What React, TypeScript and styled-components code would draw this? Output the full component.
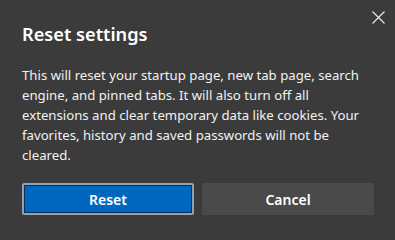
import styled, { createGlobalStyle } from "styled-components";

const GlobalStyle = createGlobalStyle`
  html, body {
    margin: 0;
    padding: 0;
    background: #3b3b3b;
  }
`;

const Dialog = styled.div`
  position: relative;
  box-sizing: border-box;
  width: 395px;
  height: 235px;
  padding: 20px 21px 0 22px;
  background: #3b3b3b;
  color: #ffffff;
  font-family: "Noto Sans", "Open Sans", Arial, sans-serif;
  overflow: hidden;
`;

const CloseButton = styled.button`
  position: absolute;
  top: 6px;
  right: 6px;
  width: 22px;
  height: 22px;
  padding: 0;
  border: none;
  background: transparent;
  display: flex;
  align-items: center;
  justify-content: center;
  cursor: pointer;
`;

const Title = styled.h2`
  margin: 0;
  font-size: 18.2px;
  line-height: 28px;
  font-weight: 600;
  color: #ffffff;
`;

const Body = styled.p`
  margin: 17px 0 0;
  font-size: 13.2px;
  line-height: 20px;
  color: #f2f2f2;
  white-space: nowrap;
`;

const Actions = styled.div`
  display: grid;
  grid-template-columns: 172px 172px;
  gap: 8px;
  margin-top: 18px;
`;

const Button = styled.button<{ $primary?: boolean }>`
  box-sizing: border-box;
  height: 32px;
  border-radius: 2px;
  font-family: inherit;
  font-size: 14px;
  font-weight: 600;
  color: #ffffff;
  cursor: pointer;
  border: ${(p) => (p.$primary ? "2px solid #8fa3b3" : "none")};
  background: ${(p) => (p.$primary ? "#0067c0" : "#4a4a4a")};
  box-shadow: ${(p) => (p.$primary ? "inset 0 0 0 1px #0b2f52" : "none")};
`;

function CloseIcon() {
  return (
    <svg width="13" height="13" viewBox="0 0 13 13">
      <path d="M0.5 0.5 L12.5 12.5 M12.5 0.5 L0.5 12.5" stroke="#e8e8e8" strokeWidth="1.2" />
    </svg>
  );
}

function App() {
  return (
    <>
      <GlobalStyle />
      <Dialog>
        <CloseButton aria-label="Close">
          <CloseIcon />
        </CloseButton>
        <Title>Reset settings</Title>
        <Body>
          This will reset your startup page, new tab page, search
          <br />
          engine, and pinned tabs. It will also turn off all
          <br />
          extensions and clear temporary data like cookies. Your
          <br />
          favorites, history and saved passwords will not be
          <br />
          cleared.
        </Body>
        <Actions>
          <Button $primary>Reset</Button>
          <Button>Cancel</Button>
        </Actions>
      </Dialog>
    </>
  );
}

export default App;
